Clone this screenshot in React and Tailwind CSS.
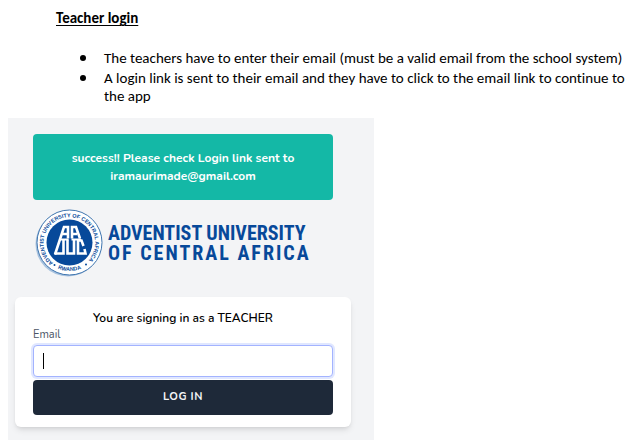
function Seal() {
  return (
    <svg viewBox="0 0 68 70" className="h-[70px] w-[68px] shrink-0" role="img" aria-label="University seal">
      <defs>
        <path id="seal-top" d="M17 54 A25.8 25.8 0 1 1 54.5 51" />
        <path id="seal-bottom" d="M14 54.5 A29 29 0 0 0 55 54.5" />
      </defs>
      <circle cx="33" cy="36" r="32.5" fill="#a9c3df" />
      <circle cx="34.5" cy="34.5" r="32.5" fill="#ffffff" stroke="#3f75af" strokeWidth="1" />
      <circle cx="34.5" cy="34.5" r="23" fill="#07499a" />
      <g fill="#07499a" fontFamily="'Liberation Sans', Arial, sans-serif" fontWeight="700" fontSize="5.4">
        <text>
          <textPath href="#seal-top" startOffset="50%" textAnchor="middle">ADVENTIST UNIVERSITY OF CENTRAL AFRICA</textPath>
        </text>
        <text>
          <textPath href="#seal-bottom" startOffset="50%" textAnchor="middle">RWANDA</textPath>
        </text>
      </g>
      <circle cx="19.5" cy="57" r="1" fill="#07499a" />
      <circle cx="51" cy="56.5" r="1" fill="#07499a" />
      <g fill="none" stroke="#ffffff" strokeWidth="2.6">
        <path d="M20 46.5 L29 19 H33 V30.5 M27 26 H33" />
        <path d="M37 30.5 V19 H41 L45 30.5 M37 26 H42" />
        <path d="M25 31.5 H33.5 M36.5 31.5 H46" strokeWidth="2" />
        <path d="M19.5 45.5 H28.5 V31.5" />
        <path d="M32.5 31.5 V45.5 H39 V31.5" />
        <path d="M48.5 38 L46.5 32.5 H43 V45.5 H50.5 L49.5 41" />
      </g>
    </svg>
  );
}

function Bullet({ children }) {
  return (
    <li className="flex items-start">
      <span aria-hidden="true" className="ml-6 mr-[18px] mt-[6px] size-[6px] shrink-0 rounded-full bg-black" />
      <span>{children}</span>
    </li>
  );
}

export default function App() {
  return (
    <main className="min-h-screen bg-white pl-2 pt-2 text-black">
      <section className="pl-12 font-['Carlito','Lato',sans-serif] text-[15px] leading-[18px]">
        <h1 className="pt-px font-bold underline underline-offset-2">Teacher login</h1>
        <ul className="mt-[22px] list-none space-y-[2px] pr-2 [font-variant-ligatures:none]">
          <Bullet>The teachers have to enter their email (must be a valid email from the school system)</Bullet>
          <Bullet>A login link is sent to their email and they have to click to the email link to continue to the app</Bullet>
        </ul>
      </section>

      <section className="mt-[13px] w-full max-w-[366px] bg-gray-100 pb-[13px] pl-[7px] pr-[23px] pt-4 font-['Nunito','Open_Sans',sans-serif]">
        <p role="status" className="mx-[18px] rounded bg-[#14b8a6] px-6 py-[15px] text-center text-[12px] font-bold leading-[18px] text-white">
          success!! Please check Login link sent to iramaurimade@gmail.com
        </p>

        <div className="ml-5 mt-2 flex items-center gap-[5px]">
          <Seal />
          <div className="whitespace-nowrap font-['Roboto_Condensed','Roboto',sans-serif] text-[20px] font-bold leading-[20px] text-[#07499a]">
            <p>ADVENTIST UNIVERSITY</p>
            <p className="tracking-widest">OF CENTRAL AFRICA</p>
          </div>
        </div>

        <form className="mt-[19px] rounded-md bg-white px-[18px] pb-3 pt-3 shadow-md" onSubmit={(e) => e.preventDefault()}>
          <h2 className="text-center text-[12px] font-semibold leading-[18px]">You are signing in as a TEACHER</h2>
          <label htmlFor="email" className="block text-[11px] leading-[16px] text-gray-600">Email</label>
          <div className="relative mt-[2px]">
            <input
              id="email"
              type="email"
              className="block h-8 w-full rounded border border-indigo-300 bg-white px-[10px] text-[12px] caret-transparent outline-none ring-2 ring-indigo-100"
            />
            <span aria-hidden="true" className="absolute left-[10px] top-2 h-4 w-px bg-black" />
          </div>
          <button type="submit" className="mt-[3px] h-[35px] w-full rounded bg-gray-800 text-[11px] font-bold uppercase tracking-wider text-gray-100">
            Log in
          </button>
        </form>
      </section>
    </main>
  );
}
